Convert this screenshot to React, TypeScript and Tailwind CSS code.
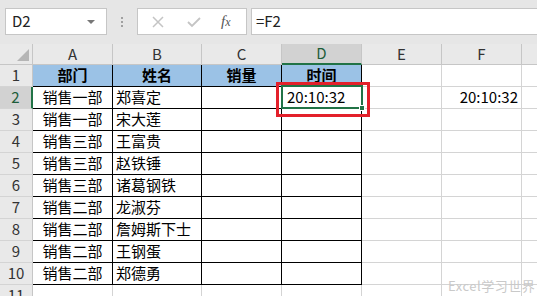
import React from 'react';

const rows: [string, string][] = [
  ['销售一部', '郑喜定'],
  ['销售一部', '宋大莲'],
  ['销售三部', '王富贵'],
  ['销售三部', '赵铁锤'],
  ['销售三部', '诸葛钢铁'],
  ['销售二部', '龙淑芬'],
  ['销售二部', '詹姆斯下士'],
  ['销售二部', '王钢蛋'],
  ['销售二部', '郑德勇'],
];

const colW = ['w-[80px]', 'w-[89px]', 'w-[80px]', 'w-[80px]', 'w-[80px]', 'w-[80px]'];
const letters = ['A', 'B', 'C', 'D', 'E', 'F'];

const font = { fontFamily: '"Noto Sans CJK SC", "Liberation Sans", sans-serif' };

function RowHead({ n, selected }: { n: number; selected?: boolean }) {
  return (
    <div
      className={`w-[33px] shrink-0 h-full flex items-center justify-center text-[15px] border-b border-[#d4d4d4] ${
        selected ? 'bg-[#d2d2d2] border-r-2 border-r-[#217346] text-[#1e5d3a]' : 'bg-[#e9e9e9] border-r border-r-[#c6c6c6] text-[#333]'
      }`}
    >
      {n}
    </div>
  );
}

export default function App() {
  return (
    <div className="w-[537px] h-[296px] overflow-hidden bg-white relative text-black" style={font}>
      {/* formula bar */}
      <div className="h-[44px] bg-[#e6e6e6] flex items-start pt-[8px] pl-[5px]">
        <div className="w-[102px] h-[27px] bg-white border border-[#c6c6c6] flex items-center justify-between px-[6px]">
          <span className="text-[15px] text-[#222]">D2</span>
          <span className="w-0 h-0 border-l-[4px] border-r-[4px] border-t-[4px] border-l-transparent border-r-transparent border-t-[#777] mr-[5px]" />
        </div>
        <div className="w-[30px] h-[27px] flex flex-col items-center justify-center gap-[2px]">
          <span className="w-[2px] h-[2px] bg-[#a0a0a0]" />
          <span className="w-[2px] h-[2px] bg-[#a0a0a0]" />
          <span className="w-[2px] h-[2px] bg-[#a0a0a0]" />
        </div>
        <div className="w-[110px] h-[27px] bg-white border border-[#c6c6c6] flex items-center">
          <svg width="14" height="14" viewBox="0 0 14 14" className="ml-[13px]">
            <path d="M2 2 L12 12 M12 2 L2 12" stroke="#c4c4c4" strokeWidth="1.5" />
          </svg>
          <svg width="16" height="14" viewBox="0 0 16 14" className="ml-[21px]">
            <path d="M2 7 L6 11 L14 3" stroke="#c4c4c4" strokeWidth="1.8" fill="none" />
          </svg>
          <span className="ml-[19px] text-[15px] italic text-[#555]" style={{ fontFamily: '"Liberation Serif", serif' }}>
            f<span className="text-[12px]">x</span>
          </span>
        </div>
        <div className="ml-[4px] flex-1 h-[27px] bg-white border border-[#c6c6c6] border-r-0 flex items-center pl-[4px]">
          <span className="text-[15px] text-[#222]">=F2</span>
        </div>
      </div>

      {/* column header */}
      <div className="flex h-[21px] text-[15px]">
        <div className="w-[33px] shrink-0 bg-[#e9e9e9] border-r border-b border-[#c6c6c6] relative">
          <span className="absolute right-[3px] bottom-[3px] w-0 h-0 border-l-[12px] border-t-[12px] border-l-transparent border-t-transparent border-r-0 border-b-0" style={{ borderBottom: '0' }} />
          <svg width="12" height="12" viewBox="0 0 12 12" className="absolute right-[3px] bottom-[3px]">
            <path d="M12 0 L12 12 L0 12 Z" fill="#b5b5b5" />
          </svg>
        </div>
        {letters.map((l, i) => (
          <div
            key={l}
            className={`${colW[i]} shrink-0 flex items-center justify-center border-r border-[#c6c6c6] ${
              l === 'D' ? 'bg-[#d2d2d2] border-b-2 border-b-[#217346] text-[#1e5d3a]' : 'bg-[#e9e9e9] border-b border-b-[#c6c6c6] text-[#333]'
            }`}
          >
            {l}
          </div>
        ))}
        <div className="flex-1 bg-[#e9e9e9] border-b border-[#c6c6c6]" />
      </div>

      {/* row 1 */}
      <div className="flex h-[22px] text-[15px]">
        <RowHead n={1} />
        {['部门', '姓名', '销量', '时间'].map((t, i) => (
          <div
            key={t}
            className={`${colW[i]} shrink-0 bg-[#9bc2e6] border-r border-b border-black font-bold flex items-center justify-center`}
          >
            {t}
          </div>
        ))}
        <div className="w-[80px] shrink-0 border-r border-b border-[#d4d4d4]" />
        <div className="w-[80px] shrink-0 border-r border-b border-[#d4d4d4]" />
        <div className="flex-1 border-b border-[#d4d4d4]" />
      </div>

      {rows.map(([dept, name], idx) => (
        <div key={idx} className="flex h-[22px] text-[15px]">
          <RowHead n={idx + 2} selected={idx === 0} />
          <div className="w-[80px] shrink-0 border-r border-b border-black flex items-center justify-center">{dept}</div>
          <div className="w-[89px] shrink-0 border-r border-b border-black flex items-center pl-[3px]">{name}</div>
          <div className="w-[80px] shrink-0 border-r border-b border-black" />
          <div className="w-[80px] shrink-0 border-r border-b border-black flex items-center pl-[5px]">
            {idx === 0 ? '20:10:32' : ''}
          </div>
          <div className="w-[80px] shrink-0 border-r border-b border-[#d4d4d4]" />
          <div className="w-[80px] shrink-0 border-r border-b border-[#d4d4d4] flex items-center justify-end pr-[3px]">
            {idx === 0 ? '20:10:32' : ''}
          </div>
          <div className="flex-1 border-b border-[#d4d4d4]" />
        </div>
      ))}

      {/* row 11 */}
      <div className="flex h-[22px] text-[15px]">
        <RowHead n={11} />
        {colW.map((w, i) => (
          <div key={i} className={`${w} shrink-0 border-r border-[#d4d4d4]`} />
        ))}
      </div>

      {/* selection */}
      <div className="absolute left-[281px] top-[85px] w-[82px] h-[24px] border-2 border-[#217346]">
        <span className="absolute right-[-4px] bottom-[-4px] w-[6px] h-[6px] bg-[#217346] border border-white" />
      </div>
      {/* red highlight */}
      <div className="absolute left-[276px] top-[82px] w-[94px] h-[35px] border-[3px] border-[#e3202a]" />

      {/* watermark */}
      <div className="absolute left-[448px] top-[276px] text-[13px] text-[#c9c9c9] tracking-[0.5px]">Excel学习世界</div>
    </div>
  );
}
